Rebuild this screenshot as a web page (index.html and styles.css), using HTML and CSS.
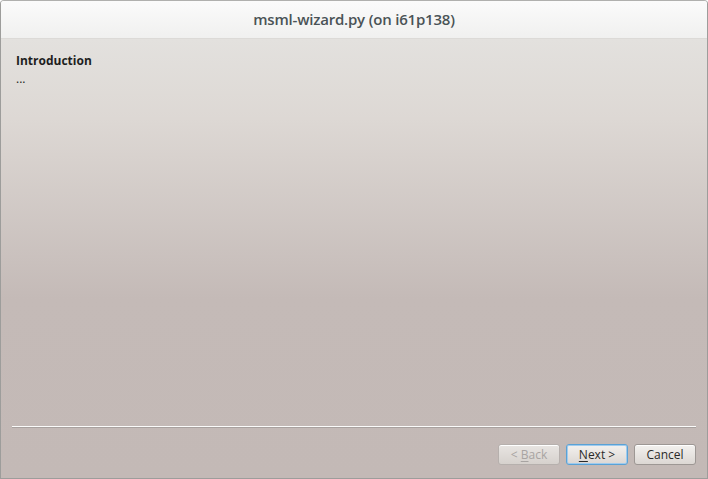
FILE: index.html
```html
<!DOCTYPE html>
<html>
<head>
<meta charset="utf-8">
<link rel="stylesheet" href="styles.css">
</head>
<body>
<div class="window">
  <div class="titlebar">msml-wizard.py (on i61p138)</div>
  <div class="content">
    <div class="page">
      <div class="heading">Introduction</div>
      <div class="sub">...</div>
    </div>
    <div class="separator"></div>
    <div class="buttons">
      <button class="btn disabled">&lt; <u>B</u>ack</button>
      <button class="btn focus"><u>N</u>ext &gt;</button>
      <button class="btn">Cancel</button>
    </div>
  </div>
</div>
</body>
</html>
```

FILE: styles.css
```css
html, body {
  margin: 0;
  padding: 0;
  width: 708px;
  height: 479px;
  overflow: hidden;
  background: #ffffff;
}
.window {
  width: 708px;
  height: 479px;
  box-sizing: border-box;
  border: 1px solid #9d9d9b;
  border-top-color: #b0b0ae;
  border-radius: 4px 4px 0 0;
  display: flex;
  flex-direction: column;
  overflow: hidden;
  font-family: "Open Sans", "DejaVu Sans", sans-serif;
}
.titlebar {
  height: 38px;
  flex: none;
  box-sizing: border-box;
  display: flex;
  align-items: center;
  justify-content: center;
  background: linear-gradient(#fbfbfb, #f0f0ef);
  border-bottom: 1px solid #dcdad7;
  color: #4a5356;
  font-size: 15px;
  font-weight: 600;
  letter-spacing: -0.2px;
  padding-bottom: 1px;
}
.content {
  flex: 1;
  display: flex;
  flex-direction: column;
  background: linear-gradient(#e3e1de 0px, #ddd8d4 80px, #c4bab7 260px, #c3b9b6 100%);
}
.page {
  flex: 1;
  padding: 13px 15px 0;
}
.heading {
  font-weight: bold;
  font-size: 12px;
  color: #1e1e1e;
  line-height: 18px;
}
.sub {
  font-size: 12px;
  color: #1e1e1e;
  line-height: 17px;
}
.separator {
  margin: 0 11px 0 11px;
  height: 1px;
  background: #fbfbfa;
  border-bottom: 1px solid #a8a19f;
  flex: none;
}
.buttons {
  flex: none;
  display: flex;
  justify-content: flex-end;
  gap: 6px;
  padding: 16px 11px 13px;
}
.btn {
  height: 21px;
  box-sizing: border-box;
  width: 62px;
  border: 1px solid #9d9794;
  border-radius: 3px;
  background: linear-gradient(#f3f1ef, #dcd7d3);
  font-family: "Open Sans", "DejaVu Sans", sans-serif;
  font-size: 12px;
  color: #2a2a2a;
  padding: 0;
  line-height: 17px;
  box-shadow: inset 0 1px 0 #ffffff;
}
.btn u {
  text-decoration-thickness: 1px;
  text-underline-offset: 2px;
}
.btn.disabled {
  color: #a8a4a2;
  border-color: #b6b0ad;
  background: linear-gradient(#e8e5e2, #d6d1cd);
}
.btn.focus {
  border-color: #5aa2d6;
  box-shadow: inset 0 0 0 1px #9fcbee;
}
```
